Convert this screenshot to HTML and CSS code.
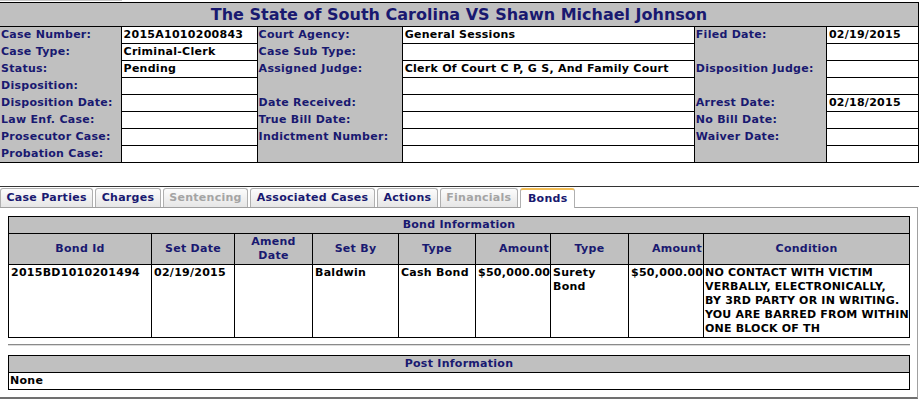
FILE: index.html
```html
<!DOCTYPE html>
<html lang="en">
<head>
  <meta charset="UTF-8" />
  <title>Case Details - Bonds</title>
  <link rel="stylesheet" href="styles.css">
</head>
<body>

<div class="top-strip"><span></span></div>

<!-- Case summary -->
<table class="case">
  <colgroup>
    <col class="c1"><col class="c2"><col class="c3"><col class="c4"><col class="c5"><col class="c6">
  </colgroup>
  <tr>
    <th colspan="6" class="case-title">The State of South Carolina VS Shawn Michael Johnson</th>
  </tr>
  <tr>
    <td class="lbl">Case Number:</td><td class="val">2015A1010200843</td>
    <td class="lbl">Court Agency:</td><td class="val">General Sessions</td>
    <td class="lbl">Filed Date:</td><td class="val">02/19/2015</td>
  </tr>
  <tr>
    <td class="lbl">Case Type:</td><td class="val">Criminal-Clerk</td>
    <td class="lbl">Case Sub Type:</td><td class="val">&nbsp;</td>
    <td class="lbl">&nbsp;</td><td class="val">&nbsp;</td>
  </tr>
  <tr>
    <td class="lbl">Status:</td><td class="val">Pending</td>
    <td class="lbl">Assigned Judge:</td><td class="val">Clerk Of Court C P, G S, And Family Court</td>
    <td class="lbl">Disposition Judge:</td><td class="val">&nbsp;</td>
  </tr>
  <tr>
    <td class="lbl">Disposition:</td><td class="val">&nbsp;</td>
    <td class="lbl">&nbsp;</td><td class="val">&nbsp;</td>
    <td class="lbl">&nbsp;</td><td class="val">&nbsp;</td>
  </tr>
  <tr>
    <td class="lbl">Disposition Date:</td><td class="val">&nbsp;</td>
    <td class="lbl">Date Received:</td><td class="val">&nbsp;</td>
    <td class="lbl">Arrest Date:</td><td class="val">02/18/2015</td>
  </tr>
  <tr>
    <td class="lbl">Law Enf. Case:</td><td class="val">&nbsp;</td>
    <td class="lbl">True Bill Date:</td><td class="val">&nbsp;</td>
    <td class="lbl">No Bill Date:</td><td class="val">&nbsp;</td>
  </tr>
  <tr>
    <td class="lbl">Prosecutor Case:</td><td class="val">&nbsp;</td>
    <td class="lbl">Indictment Number:</td><td class="val">&nbsp;</td>
    <td class="lbl">Waiver Date:</td><td class="val">&nbsp;</td>
  </tr>
  <tr>
    <td class="lbl">Probation Case:</td><td class="val">&nbsp;</td>
    <td class="lbl">&nbsp;</td><td class="val">&nbsp;</td>
    <td class="lbl">&nbsp;</td><td class="val">&nbsp;</td>
  </tr>
</table>

<div class="rule"></div>

<!-- Tabs -->
<ul class="tabs">
  <li class="tab">Case Parties</li>
  <li class="tab">Charges</li>
  <li class="tab off">Sentencing</li>
  <li class="tab">Associated Cases</li>
  <li class="tab">Actions</li>
  <li class="tab off">Financials</li>
  <li class="tab on">Bonds</li>
</ul>

<div class="panel">
  <table class="grid bonds">
    <colgroup>
      <col class="b-id"><col class="b-set"><col class="b-amend"><col class="b-by"><col class="b-type">
      <col class="b-amt"><col class="b-type2"><col class="b-amt2"><col class="b-cond">
    </colgroup>
    <tr><th colspan="9">Bond Information</th></tr>
    <tr>
      <th>Bond Id</th>
      <th>Set Date</th>
      <th>Amend Date</th>
      <th>Set By</th>
      <th>Type</th>
      <th class="num">Amount</th>
      <th>Type</th>
      <th class="num">Amount</th>
      <th>Condition</th>
    </tr>
    <tr>
      <td>2015BD1010201494</td>
      <td>02/19/2015</td>
      <td></td>
      <td>Baldwin</td>
      <td>Cash Bond</td>
      <td class="num">$50,000.00</td>
      <td>Surety Bond</td>
      <td class="num">$50,000.00</td>
      <td class="cond">NO CONTACT WITH VICTIM VERBALLY, ELECTRONICALLY,<br>BY 3RD PARTY OR IN WRITING. YOU ARE BARRED FROM WITHIN ONE BLOCK OF TH</td>
    </tr>
  </table>

  <div class="sep"></div>

  <table class="grid post">
    <tr><th>Post Information</th></tr>
    <tr><td>None</td></tr>
  </table>
</div>

</body>
</html>
```

FILE: styles.css
```css
body {
  margin: 0;
  font-family: "DejaVu Sans", Verdana, sans-serif;
  font-size: 11px;
  font-weight: bold;
  letter-spacing: 0.27px;
  color: #000;
  background: #fff;
}
.top-strip {
  height: 2px;
}
.top-strip span {
  display: block;
  width: 122px;
  height: 1px;
  background: #c8c8c8;
}
/* Case summary */
.case {
  border-collapse: collapse;
  table-layout: fixed;
  width: 919px;
  border-top: 1px solid #000;
  border-right: 1px solid #000;
  border-bottom: 1px solid #000;
}
.c1 { width: 121px; }
.c2 { width: 136px; }
.c3 { width: 145px; }
.c4 { width: 292px; }
.c5 { width: 132px; }
.c6 { width: 92px; }
.case-title {
  background: #c0c0c0;
  color: #191970;
  font-size: 16px;
  letter-spacing: 0;
  line-height: 23px;
  padding: 0;
  text-align: center;
  border-bottom: 1px solid #000;
}
.case td {
  line-height: 14px;
  padding: 1px 2px;
  white-space: nowrap;
  overflow: hidden;
}
.case .lbl {
  background: #c0c0c0;
  color: #191970;
  padding-left: 1px;
}
.case .val {
  border: 1px solid #000;
}
.rule {
  margin-top: 23px;
  border-top: 1px solid #333;
}
/* Tabs */
.tabs {
  list-style: none;
  margin: 1px 0 0;
  padding: 0;
  display: flex;
  gap: 2px;
  height: 19px;
  position: relative;
  z-index: 1;
}
.tab {
  height: 18px;
  line-height: 17px;
  padding: 0 5.5px;
  border: 1px solid #b0b0b0;
  border-bottom: none;
  border-radius: 3px 3px 0 0;
  background: linear-gradient(#fcfcfc, #e6e6e6);
  color: #191970;
}
.tab.off {
  color: #a4a4a4;
}
.tab.on {
  background: #fff;
  border-top: 2px solid #f2bd55;
  height: 18px;
  line-height: 17px;
  padding: 0 7px;
}
/* Panel */
.panel {
  padding: 8px 7px 7px 8px;
  box-sizing: border-box;
  width: 918px;
  border: 1px solid #a0a0a0;
  border-left: none;
  border-bottom: 2px solid #707070;
}
.grid {
  border-collapse: collapse;
  table-layout: fixed;
  width: 902px;
  border: 1px solid #000;
}
.grid th {
  background: #c0c0c0;
  color: #191970;
  border: 1px solid #000;
  padding: 1px 2px;
  line-height: 14px;
  text-align: center;
  vertical-align: middle;
}
.grid td {
  border: 1px solid #000;
  padding: 1px 2px;
  line-height: 14px;
  vertical-align: top;
}
.grid .num {
  text-align: right;
  padding-right: 1px;
}
.grid .cond {
  padding: 1px 0 1px 1px;
  letter-spacing: 0.2px;
}
.b-id { width: 143px; }
.b-set { width: 83px; }
.b-amend { width: 78px; }
.b-by { width: 86px; }
.b-type { width: 77px; }
.b-amt { width: 75px; }
.b-type2 { width: 78px; }
.b-amt2 { width: 75px; }
.b-cond { width: 206px; }
.post td {
  padding-left: 1px;
}
.sep {
  margin: 6px 0 9px;
  border-top: 1px solid #8a8a8a;
  border-bottom: 1px solid #dcdcdc;
}
```
